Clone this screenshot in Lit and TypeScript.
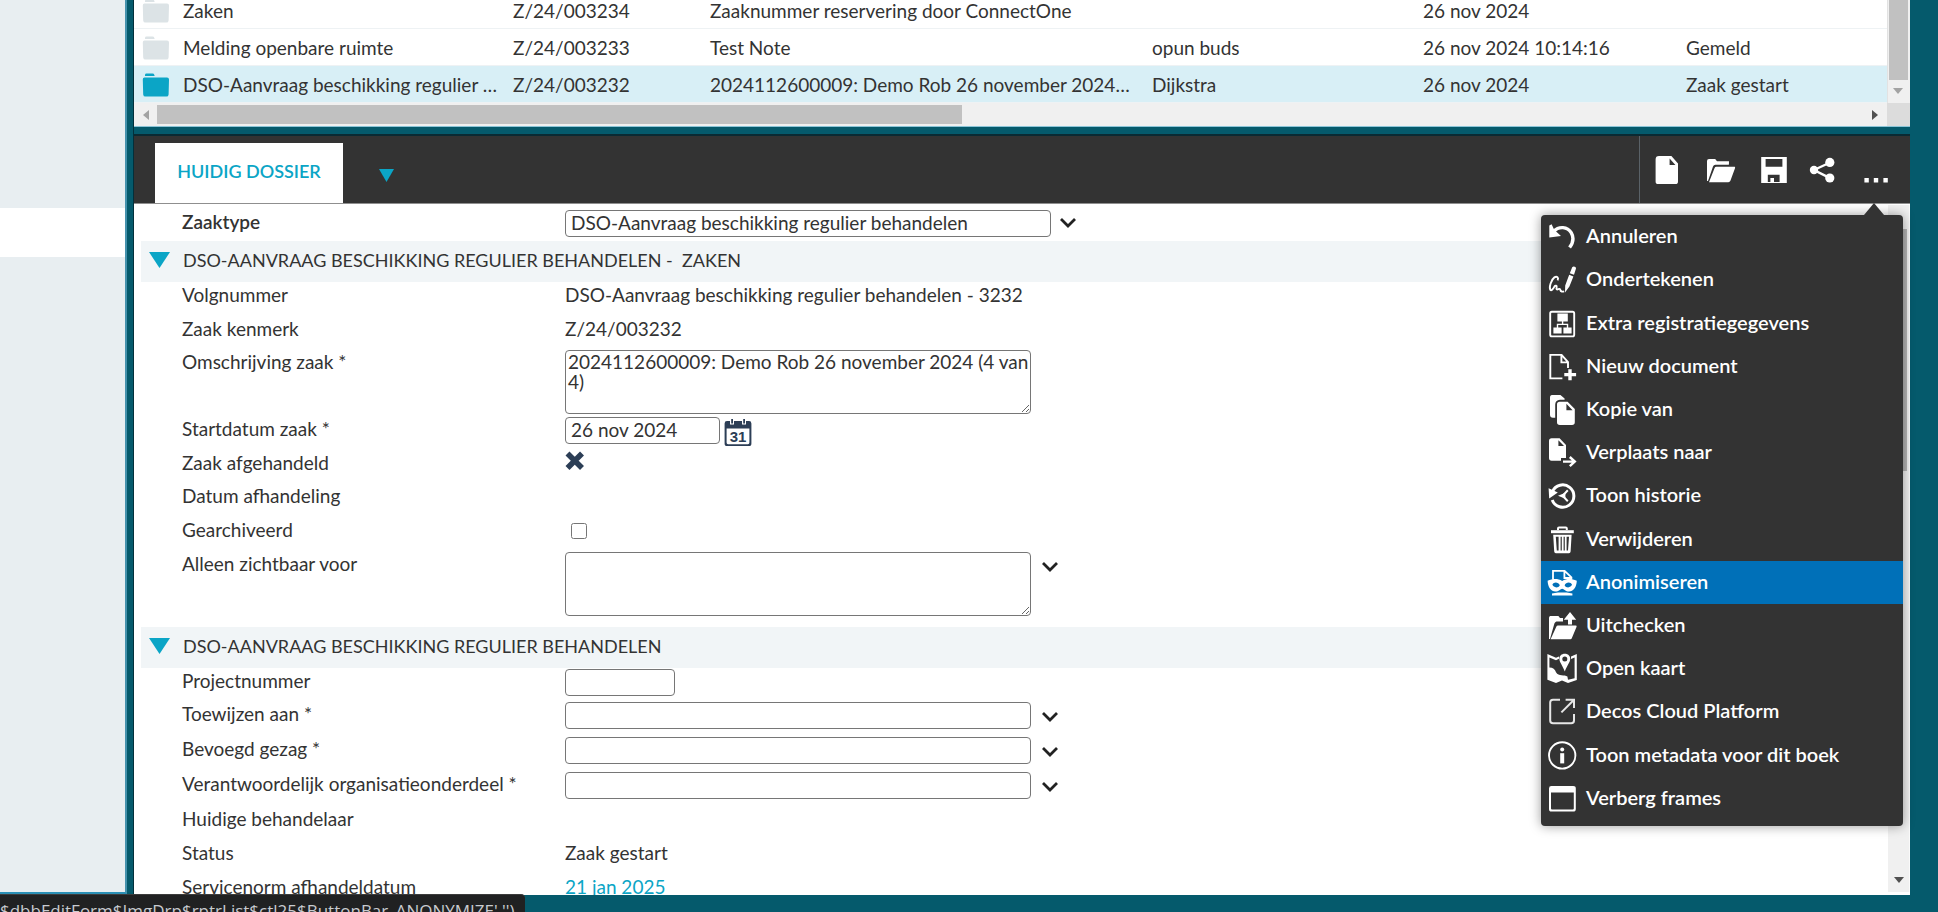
import { LitElement, html, svg, css, nothing, TemplateResult } from "lit";
import { customElement, state } from "lit/decorators.js";
import { classMap } from "lit/directives/class-map.js";

/* ---------- Icons ---------- */

const menuIcons: Record<string, TemplateResult> = {
  undo: svg`<path d="M2.3 10.5 4.6 9.3 6.6 13.6 8 15.5 14 21 2.3 22.6Z"/><path class="s" stroke-width="3.4" d="M6.5 16.5C12 10.8 20.4 11.6 24.2 17.6 27 22.4 26 28 22.6 32.6"/>`,
  sign: svg`<path class="s" stroke-width="1.9" d="M10.6 22.4C12 19.6 9.8 17.8 7.4 19.4 4 21.8 1.8 29.6 3.4 32 4.6 33 6.4 30.4 7.4 28.6 8.4 27 10.2 27.4 9.6 29.4 9 31.4 10 31.8 11.2 31.2 12.6 30.6 13.4 31 13.4 32.2 13.6 33.8 15.4 33.8 17.2 33.4"/><path d="M25.2 9.2C26.4 7.6 29.2 8.6 29 10.6L27 16.8 22.8 15.2ZM22.2 16.8 26.4 18.4 22.4 28.4 18 34.4 18.2 27.4Z"/>`,
  tree: svg`<rect class="s" stroke-width="1.9" x="3.2" y="9.8" width="24" height="24.6" rx="1.6"/><path d="M10.4 11.4h10.4v8H10.4zM6.4 25.4h8.2v6.2H6.4zM16.4 25.4h8.2v6.2h-8.2z"/><path class="s" stroke-width="1.4" d="M15.6 19v3M10.5 26v-3.6h10V26"/>`,
  docAdd: svg`<path class="s" stroke-width="1.9" d="M15.4 33.4H3.3V9.9H14.6L21 17v6M14.4 10v7.4H21"/><path d="M21.3 24.2h3.4v3.8h4.4v3.2h-4.4v4h-3.4v-4h-4v-3.2h4z"/>`,
  copy: svg`<path d="M5 7H13.4L17.6 10.6V11.8H13C9.8 12 8.2 14 8.2 16.8V29.8H6C4 29.8 3 28.6 3 26.8V9.8C3 8 3.6 7 5 7Z"/><path fill-rule="evenodd" d="M12.6 13.8H20.6L27.8 21V34.2C27.8 36 26.8 37 25 37H12.8C11 37 10 36 10 34.2V16.6C10 14.8 11 13.8 12.6 13.8ZM19.4 15.8V22.2H25.6Z"/>`,
  move: svg`<path fill-rule="evenodd" d="M4.6 7.2H12.6L19 14V27H14V29.8H4.6C3 29.8 2 28.8 2 27V10C2 8.2 3 7.2 4.6 7.2ZM11.4 9.2V15H17Z"/><path class="s" stroke-width="2.4" d="M16 30.6H27.4M22.8 26 27.8 30.6 22.8 35.2"/>`,
  history: svg`<path class="s" stroke-width="3" d="M5.4 17.6A11.2 11.2 0 1 1 5.2 26"/><path d="M1.6 14.2 4.4 15.4 10.8 18.6 2.2 24.6ZM11 21.8 18.4 18.8V24.8Z"/><path class="s" stroke-width="2" d="M20.8 16.2 15.6 21.8 20.8 27.2"/>`,
  trash: svg`<path d="M4 12.2H26.8V15.2H4Z"/><path class="s" stroke-width="2" d="M11 12V10.6Q11 9.6 12 9.6H18.8Q19.8 9.6 19.8 10.6V12"/><path fill-rule="evenodd" d="M6.2 16.8H24.6L23.6 33.6Q23.4 35.2 22 35.2H8.8Q7.4 35.2 7.2 33.6ZM8.8 18.8 9.8 32.6H11.6V18.8ZM13.6 18.8V32.6H14.8V18.8ZM16.6 18.8V32.6H17.8V18.8ZM19.6 18.8V32.6H21L22 18.8Z"/>`,
  mask: svg`<path class="s" stroke-width="1.8" d="M6 18.4V9.8H17.6L24.4 16.4V18.4M17.4 10V17H24"/><path fill-rule="evenodd" d="M.6 19.8C6 17.4 11 17.6 15.2 20 19.4 17.6 24.4 17.4 29.8 19.8 29.6 26 26.4 30.6 22 30.6 18.6 30.6 17 28 15.2 27.8 13.4 28 11.8 30.6 8.4 30.6 4 30.6 .8 26 .6 19.8ZM5.4 23.6C6.4 27 11.4 27.4 12.8 24.2 11.4 20.8 6.6 20.8 5.4 23.6ZM25 23.6C23.8 20.8 19 20.8 17.6 24.2 19 27.4 24 27 25 23.6Z"/><path d="M5 32.4 11 31.4H19.6L25.4 32.4V34.4H5Z"/>`,
  checkout: svg`<path d="M2 35V14.2C2 12.6 2.6 12 4.2 12H11.4L13 14H16V17.4H10.6C8.8 17.4 8 18 7.4 19.6L3 35Z"/><path d="M3.6 35.2 9.4 22.4Q9.8 21.4 11 21.4H28.6Q30 21.4 29.6 22.8L24.8 34.2Q24.4 35.2 23.4 35.2Z"/><path d="M23 8 29.2 15.8H25V20.4H21V15.8H16.8Z"/>`,
  map: svg`<path fill-rule="evenodd" d="M.4 7 9 10.8 12 9.6V11.8L9 13.2 2.4 10.4V20.4C6 20.4 8 22.4 9 25.2 11.6 30 17.6 27 20.4 29.6L21 32.8 27.6 31.2V10.4L24 12V9.6L29.8 7V33L21 36 15 33.4 9 36 .4 32.8Z"/><path fill-rule="evenodd" d="M17.8 6.8C21.2 6.8 23.2 9 23.2 12 23.2 15.4 19.4 19.4 17.8 24.6 16.2 19.4 12.4 15.4 12.4 12 12.4 9 14.4 6.8 17.8 6.8ZM17.8 9.4A2.5 2.5 0 1 0 17.8 14.4 2.5 2.5 0 1 0 17.8 9.4Z"/>`,
  external: svg`<g opacity=".88"><path class="s" stroke-width="2" d="M13 9.8H6Q3.2 9.8 3.2 12.6V30.4Q3.2 33.2 6 33.2H24.2Q27 33.2 27 30.4V24M18.6 9.8H27V18M26.8 10 14.4 22.4"/></g>`,
  info: svg`<circle class="s" stroke-width="1.9" cx="15.2" cy="21.4" r="13.2"/><circle cx="15.2" cy="15.6" r="2"/><path d="M13.2 19.2h4v10.2h-4z"/>`,
  frame: svg`<path fill-rule="evenodd" d="M4.4 9H26.2Q28.8 9 28.8 11.4V32Q28.8 34.6 26.2 34.6H4.4Q2 34.6 2 32V11.4Q2 9 4.4 9ZM4 15.6V31.6Q4 32.6 5 32.6H25.8Q26.8 32.6 26.8 31.6V15.6Z"/>`,
};

const toolIcons: Record<string, TemplateResult> = {
  document: svg`<path fill-rule="evenodd" d="M9 3H21.4L28 10.4V28.4Q28 31 25.4 31H8.2Q5.6 31 5.6 28.4V6.4Q5.6 3 9 3ZM19.6 5.6V12H25.4Z"/>`,
  folder: svg`<path d="M3 28V8Q3 6 5 6H11.2L13 8.2H25Q25 11.8 24.8 11.8H11.4Q9.6 11.8 9 13.6L4 28Z"/><path d="M5 29.2 10.6 15Q11 13.8 12.4 13.8H30.6Q31.4 13.8 31 15.2L26.4 27.8Q25.8 29.2 24.4 29.2Z"/>`,
  save: svg`<path fill-rule="evenodd" d="M4.2 4H29.8V30H4.2ZM8.6 6V13.8H25.4V6ZM10.8 21.8V29H13.4V25H17V29H22.6V21.8Z"/>`,
  share: svg`<circle cx="8" cy="17" r="4.2"/><circle cx="23.8" cy="9.4" r="4.6"/><circle cx="23.8" cy="25" r="4.6"/><path class="s" stroke-width="2.4" d="M23 10 8 17 23 24.6"/>`,
  more: svg`<path d="M5.4 25h4.4v4.4H5.4zM14.8 25h4.4v4.4h-4.4zM24.4 25h4.4v4.4h-4.4z"/>`,
};

const iconStyles = css`
  svg { display: block; fill: currentColor; }
  svg .s { fill: none; stroke: currentColor; }
  button, input, textarea { font: inherit; color: inherit; margin: 0; }
  button { border: 0; padding: 0; background: none; cursor: pointer; }
`;

/* ---------- Result list ---------- */

interface Row { type: string; nr: string; subject: string; person: string; date: string; status: string; selected?: boolean; }

const rows: Row[] = [
  { type: "Zaken", nr: "Z/24/003234", subject: "Zaaknummer reservering door ConnectOne", person: "", date: "26 nov 2024", status: "" },
  { type: "Melding openbare ruimte", nr: "Z/24/003233", subject: "Test Note", person: "opun buds", date: "26 nov 2024 10:14:16", status: "Gemeld" },
  { type: "DSO-Aanvraag beschikking regulier behandelen", nr: "Z/24/003232", subject: "2024112600009: Demo Rob 26 november 2024 (4 van 4)", person: "Dijkstra", date: "26 nov 2024", status: "Zaak gestart", selected: true },
];

@customElement("case-list")
class CaseList extends LitElement {
  static styles = [iconStyles, css`
    :host { display: grid; grid-template-columns: minmax(0, 1fr) 23px; grid-template-rows: minmax(0, 1fr) 23px; background: #fff; overflow: hidden; border-bottom: 1px solid #8cc5d8; }
    .view { display: flex; flex-direction: column; justify-content: flex-end; overflow: hidden; min-height: 0; }
    table { table-layout: fixed; width: 100%; border-collapse: separate; border-spacing: 0; }
    td { height: 35px; line-height: 35px; padding: 1px 8px 0 7px; border-bottom: 1px solid #eef2f4; white-space: nowrap; overflow: hidden; text-overflow: ellipsis; }
    td.icon { padding: 1px 0 0 8px; color: #dce3e6; }
    td.subject { padding-right: 14px; }
    .selected td { background: #d8eff6; }
    .selected td.icon { color: #0ba5c6; }
    .c-icon { width: 42px; } .c-type { width: 330px; } .c-nr { width: 197px; } .c-subject { width: 442px; } .c-person { width: 271px; } .c-date { width: 263px; }
    .vbar { background: #f0f0f0; display: flex; flex-direction: column; align-items: center; color: #a3a3a3; border-left: 1px solid #e2e2e2; }
    .vthumb { flex: 1; width: 19px; background: #c1c1c1; margin-right: 2px; }
    .vbar svg { margin: 8px 2px 9px 0; }
    .hbar { background: #f0f0f0; display: flex; align-items: center; padding: 0 9px; color: #505050; }
    .hthumb { height: 19px; width: 805px; margin: 0 auto 0 8px; background: #c1c1c1; }
    .hbar .dim { color: #a3a3a3; }
    .corner { background: #dcdcdc; }
  `];
  render() {
    return html`
      <div class="view">
        <table>
          <colgroup><col class="c-icon"><col class="c-type"><col class="c-nr"><col class="c-subject"><col class="c-person"><col class="c-date"><col></colgroup>
          <tbody>
            ${rows.map((r) => html`<tr class=${classMap({ selected: !!r.selected })}>
              <td class="icon"><svg width="28" height="24" viewBox="0 0 28 24"><path d="M3 3V2Q3 .6 4.6 .6H10.4Q12 .6 12.4 2L12.6 3ZM2.4 4.4H25Q27 4.4 27 6.4L26.6 21.4Q26.4 23.6 24.4 23.6H3.4Q1.4 23.6 1.2 21.4L.8 6.4Q.8 4.4 2.4 4.4Z"/></svg></td>
              <td>${r.type}</td><td>${r.nr}</td><td class="subject">${r.subject}</td><td>${r.person}</td><td>${r.date}</td><td>${r.status}</td>
            </tr>`)}
          </tbody>
        </table>
      </div>
      <div class="vbar"><div class="vthumb"></div><svg width="10" height="6"><path d="M0 0h10L5 6z"/></svg></div>
      <div class="hbar"><svg class="dim" width="6" height="10"><path d="M6 0v10L0 5z"/></svg><div class="hthumb"></div><svg width="6" height="10"><path d="M0 0v10l6-5z"/></svg></div>
      <div class="corner"></div>`;
  }
}

/* ---------- Context menu ---------- */

const menuItems: [string, string][] = [
  ["undo", "Annuleren"], ["sign", "Ondertekenen"], ["tree", "Extra registratiegegevens"], ["docAdd", "Nieuw document"],
  ["copy", "Kopie van"], ["move", "Verplaats naar"], ["history", "Toon historie"], ["trash", "Verwijderen"],
  ["mask", "Anonimiseren"], ["checkout", "Uitchecken"], ["map", "Open kaart"], ["external", "Decos Cloud Platform"],
  ["info", "Toon metadata voor dit boek"], ["frame", "Verberg frames"],
];

@customElement("action-menu")
class ActionMenu extends LitElement {
  static styles = [iconStyles, css`
    :host { display: block; width: 362px; background: #333; border-radius: 4px; box-shadow: 0 0 12px rgba(0, 0, 0, .4); color: #fff; }
    .arrow { position: absolute; right: 19px; bottom: 100%; color: #333; }
    .items { display: grid; grid-auto-rows: 1fr; height: 605px; padding-bottom: 6px; }
    button { display: flex; align-items: center; gap: 9px; padding-left: 6px; font-size: 20px; font-weight: 600; text-align: left; min-height: 0; }
    button.active { background: #0070b8; }
    svg.icon { flex: none; }
    .label { padding-bottom: 2px; }
  `];
  @state() private active = "Anonimiseren";
  render() {
    return html`
      <svg class="arrow" width="20" height="12"><path d="M10 0 20 12H0z"/></svg>
      <div class="items" role="menu">
        ${menuItems.map(([icon, label]) => html`
          <button role="menuitem" class=${classMap({ active: label === this.active })} @mouseenter=${() => (this.active = label)}>
            <svg class="icon" width="30" height="43" viewBox="0 0 30 43">${menuIcons[icon]}</svg><span class="label">${label}</span>
          </button>`)}
      </div>`;
  }
}

/* ---------- Detail form ---------- */

const chevron = html`<button class="pick" aria-label="Kies waarde"><svg width="16" height="12" viewBox="0 0 16 12"><path class="s" stroke-width="2.8" d="M1 2 8 9 15 2"/></svg></button>`;
const text = (id: string, cls: string, value = "") => html`<input type="text" id=${id} class=${cls} .value=${value}>`;

@customElement("case-form")
class CaseForm extends LitElement {
  static styles = [iconStyles, css`
    :host { display: grid; grid-template-columns: minmax(0, 1fr) 22px; background: #fff; overflow: hidden; min-height: 0; }
    .body { padding-left: 7px; min-height: 0; overflow: hidden; }
    .row { display: grid; grid-template-columns: 383px minmax(0, 1fr); padding-left: 41px; min-height: 34px; line-height: 25px; }
    .row.snug { min-height: 33px; }
    .row.wide { min-height: 35px; }
    .row.tall { min-height: 67px; }
    .row.last { min-height: 76px; }
    .row.type { min-height: 32px; padding-top: 5px; }
    .row.type label { font-weight: 600; }
    .field { display: flex; align-items: flex-start; }
    input[type="text"], textarea { box-sizing: border-box; border: 1px solid #767676; border-radius: 4px; background: #fff; margin-top: 1px; }
    input[type="text"] { height: 27px; padding: 0 5px 3px; }
    textarea { height: 64px; width: 466px; padding: 1px 0 1px 2px; line-height: 20px; }
    .full { width: 466px; }
    .xl { width: 486px; }
    .date { width: 155px; }
    .short { width: 110px; }
    .pick { padding: 10px 11px 0; color: #222; }
    .type .pick { padding-top: 8px; padding-left: 9px; }
    .cal { padding: 2px 0 0 4px; color: #2c3e56; }
    .cross { margin-top: 1px; color: #2c3e56; }
    input[type="checkbox"] { width: 16px; height: 16px; margin: 6px 0 0 6px; }
    h2 { margin: 0; display: flex; align-items: center; gap: 13px; height: 41px; padding: 0 0 3px 8px; box-sizing: border-box; background: #f1f5f7; font-size: 18px; font-weight: 400; white-space: pre; color: #333; }
    h2 svg { color: #0ba5c6; }
    a { color: #0ba5c6; text-decoration: none; }
    .vbar { display: flex; flex-direction: column; align-items: center; background: #f0f0f0; margin: 1px 0 3px; padding: 24px 0 9px; border-right: 1px solid #fafafa; box-sizing: border-box; color: #505050; justify-content: space-between; }
    .vthumb { width: 17px; height: 37%; background: #b4b4b4; }
  `];
  private section(title: string) {
    return html`<h2><svg width="21" height="16" viewBox="0 0 42 32"><path d="M0 0h42L21 32z"/></svg><span>${title}</span></h2>`;
  }
  private row(id: string, label: string, field: unknown = nothing, cls = "") {
    return html`<div class="row ${cls}">${id ? html`<label for=${id}>${label}</label>` : html`<span>${label}</span>`}<div class="field">${field}</div></div>`;
  }
  render() {
    return html`
      <div class="body">
        ${this.row("zaaktype", "Zaaktype", html`${text("zaaktype", "xl", "DSO-Aanvraag beschikking regulier behandelen")}${chevron}`, "type")}
        ${this.section("DSO-AANVRAAG BESCHIKKING REGULIER BEHANDELEN -  ZAKEN")}
        ${this.row("", "Volgnummer", "DSO-Aanvraag beschikking regulier behandelen - 3232")}
        ${this.row("", "Zaak kenmerk", "Z/24/003232", "snug")}
        ${this.row("omschrijving", "Omschrijving zaak *", html`<textarea id="omschrijving" .value=${"2024112600009: Demo Rob 26 november 2024 (4 van 4)"}></textarea>`, "tall")}
        ${this.row("startdatum", "Startdatum zaak *", html`${text("startdatum", "date", "26 nov 2024")}
          <button class="cal" aria-label="Kalender"><svg width="28" height="29" viewBox="0 0 28 29">
            <path fill-rule="evenodd" d="M3 3H25Q27.4 3 27.4 5.4V25.4Q27.4 28 25 28H3Q.6 28 .6 25.4V5.4Q.6 3 3 3ZM2.6 10.5V24.6Q2.6 26.2 4 26.2H24Q25.4 26.2 25.4 24.6V10.5Z"/>
            <path fill="#fff" d="M6 1h4v5.5H6zM18 1h4v5.5h-4z"/><path d="M7.2 1h1.8v4.5H7.2zM19.2 1h1.8v4.5h-1.8z"/>
            <text x="14" y="24" text-anchor="middle" font-family="Liberation Sans" font-weight="700" font-size="15">31</text></svg></button>`)}
        ${this.row("", "Zaak afgehandeld", html`<svg class="cross" width="20" height="20" viewBox="0 0 20 20"><path class="s" stroke-width="5.6" d="M2.5 2.5 17 17M17 2.5 2.5 17"/></svg>`, "snug")}
        ${this.row("", "Datum afhandeling")}
        ${this.row("gearchiveerd", "Gearchiveerd", html`<input type="checkbox" id="gearchiveerd">`)}
        ${this.row("zichtbaar", "Alleen zichtbaar voor", html`<textarea id="zichtbaar"></textarea>${chevron}`, "last")}
        ${this.section("DSO-AANVRAAG BESCHIKKING REGULIER BEHANDELEN")}
        ${this.row("project", "Projectnummer", text("project", "short"), "snug")}
        ${this.row("toewijzen", "Toewijzen aan *", html`${text("toewijzen", "full")}${chevron}`, "wide")}
        ${this.row("gezag", "Bevoegd gezag *", html`${text("gezag", "full")}${chevron}`, "wide")}
        ${this.row("onderdeel", "Verantwoordelijk organisatieonderdeel *", html`${text("onderdeel", "full")}${chevron}`, "wide")}
        ${this.row("", "Huidige behandelaar")}
        ${this.row("", "Status", "Zaak gestart")}
        ${this.row("", "Servicenorm afhandeldatum", html`<a href="#">21 jan 2025</a>`)}
      </div>
      <div class="vbar"><div class="vthumb"></div><svg width="10" height="6"><path d="M0 0h10L5 6z"/></svg></div>`;
  }
}

/* ---------- Shell ---------- */

@customElement("app-root")
class AppRoot extends LitElement {
  static styles = [iconStyles, css`
    :host { display: grid; grid-template-columns: 127px minmax(0, 1fr); column-gap: 6px; height: 100vh; padding-right: 28px; box-sizing: border-box; background: #055a6c; font: 19px/25px Lato, "Open Sans", sans-serif; color: #333; overflow: hidden; position: relative; }
    .side { background: #e8eef1; border-right: 2px solid #4592ad; border-bottom: 2px solid #2a8fb5; margin-bottom: 18px; padding-top: 208px; }
    .current { height: 49px; background: #fff; }
    .main { display: grid; grid-template-rows: 127px minmax(0, 1fr); row-gap: 7px; margin-bottom: 17px; min-height: 0; border-left: 1px solid #02303b; }
    .detail { position: relative; display: grid; grid-template-rows: 70px minmax(0, 1fr); min-height: 0; }
    header { display: flex; background: #333; border-top: 2px solid #0a2a33; border-bottom: 1px solid #8f8f8f; padding-left: 21px; }
    .tab { margin-top: 7px; background: #fff; color: #0ba5c6; font-size: 18px; font-weight: 600; line-height: 56px; width: 188px; text-align: center; padding-bottom: 4px; }
    .tabs-more { margin-left: 36px; padding-top: 12px; color: #0ba5c6; }
    .tools { margin-left: auto; display: grid; grid-template-columns: 54px 54px 52px 46px 60px; padding-right: 4px; border-left: 1px solid #5a6268; color: #fff; }
    .tools button { display: grid; place-items: center; padding-top: 1px; }
    action-menu { position: absolute; top: 81px; right: 7px; z-index: 2; }
    .status { position: absolute; left: 0; bottom: 0; width: 525px; height: 18px; box-sizing: border-box; overflow: hidden; white-space: nowrap; padding-top: 4px; background: #202122; border-top: 1px solid #3c3c3c; border-top-right-radius: 4px; color: #c8cbd0; font: 17px/24px "Open Sans", sans-serif; z-index: 3; }
  `];
  render() {
    return html`
      <aside class="side"><div class="current"></div></aside>
      <main class="main">
        <case-list></case-list>
        <section class="detail">
          <header>
            <button class="tab">HUIDIG DOSSIER</button>
            <button class="tabs-more" aria-label="Meer tabbladen"><svg width="15" height="13" viewBox="0 0 30 26"><path d="M0 0h30L15 26z"/></svg></button>
            <div class="tools">
              ${Object.entries(toolIcons).map(([name, icon]) => html`<button aria-label=${name}><svg width="34" height="34" viewBox="0 0 34 34">${icon}</svg></button>`)}
            </div>
          </header>
          <case-form></case-form>
          <action-menu></action-menu>
        </section>
      </main>
      <div class="status">$dbbEditForm$ImgDrp$rptrList$ctl25$ButtonBar_ANONYMIZE','')</div>`;
  }
}
